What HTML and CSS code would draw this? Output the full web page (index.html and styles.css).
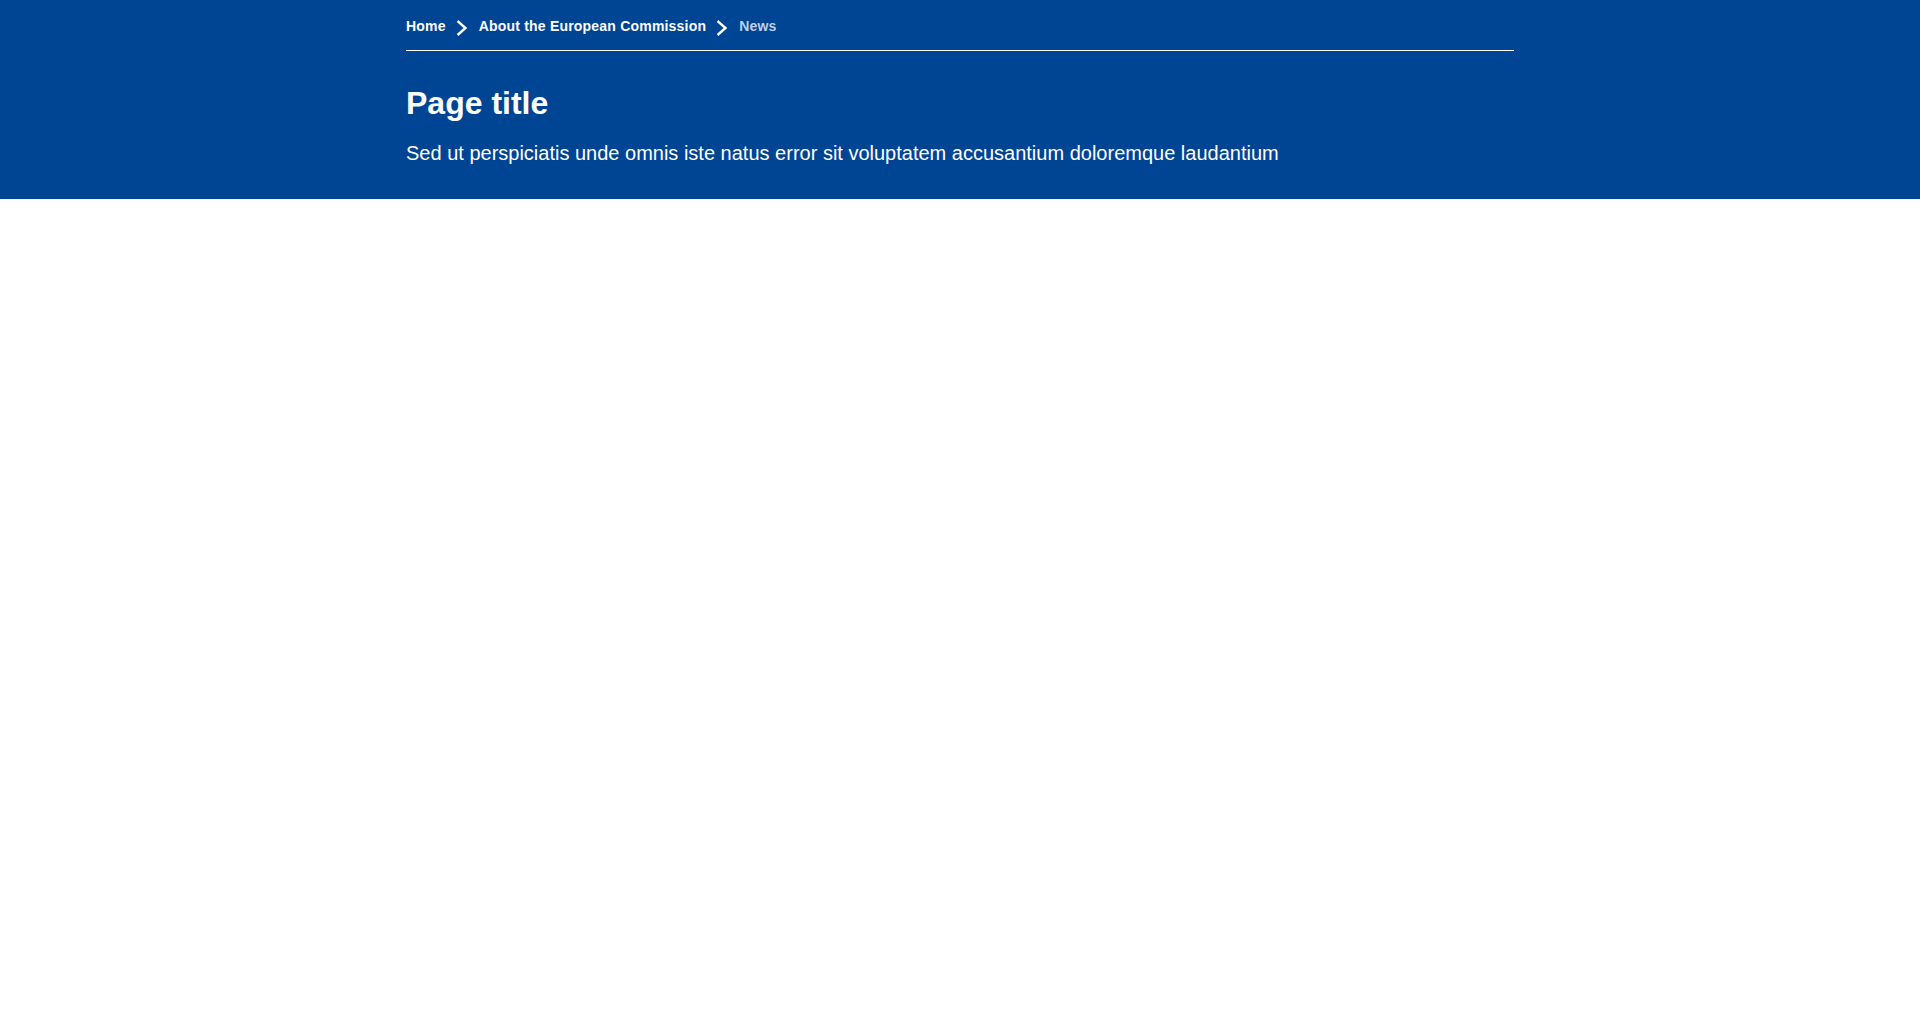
FILE: index.html
```html
<!DOCTYPE html>
<html lang="en">
<head>
<meta charset="utf-8">
<title>Page title</title>
<link rel="stylesheet" href="styles.css">
</head>
<body>
<header class="page-header">
  <div class="container">
    <nav class="breadcrumb" aria-label="Breadcrumb">
      <ol class="breadcrumb-list">
        <li class="breadcrumb-item"><a class="breadcrumb-link" href="#">Home</a><svg class="breadcrumb-chevron" width="12" height="16" viewBox="0 0 12 16" aria-hidden="true"><polyline points="2.5,1.8 9.5,8 2.5,14.2" fill="none" stroke="#ffffff" stroke-width="2.4" stroke-linecap="square" stroke-linejoin="miter"/></svg></li>
        <li class="breadcrumb-item"><a class="breadcrumb-link" href="#">About the European Commission</a><svg class="breadcrumb-chevron" width="12" height="16" viewBox="0 0 12 16" aria-hidden="true"><polyline points="2.5,1.8 9.5,8 2.5,14.2" fill="none" stroke="#ffffff" stroke-width="2.4" stroke-linecap="square" stroke-linejoin="miter"/></svg></li>
        <li class="breadcrumb-item breadcrumb-current" aria-current="page">News</li>
      </ol>
    </nav>
    <h1 class="page-title">Page title</h1>
    <p class="page-description">Sed ut perspiciatis unde omnis iste natus error sit voluptatem accusantium doloremque laudantium</p>
  </div>
</header>
</body>
</html>
```

FILE: styles.css
```css
html, body {
  margin: 0;
  padding: 0;
  background: #ffffff;
}

body {
  font-family: "Liberation Sans", Arial, sans-serif;
  color: #ffffff;
}

.page-header {
  background: #004494;
  padding-bottom: 32px;
}

.container {
  max-width: 1140px;
  margin: 0 auto;
  padding: 0 16px;
  box-sizing: border-box;
}

.breadcrumb {
  padding: 16px 0 14px;
  border-bottom: 1px solid #ffffff;
}

.breadcrumb-list {
  display: flex;
  align-items: center;
  list-style: none;
  margin: 0;
  padding: 0;
  font-size: 14px;
  line-height: 20px;
  font-weight: 700;
  letter-spacing: 0.2px;
}

.breadcrumb-item {
  display: flex;
  align-items: center;
}

.breadcrumb-link {
  color: #ffffff;
  text-decoration: none;
}

.breadcrumb-chevron {
  display: block;
  margin: 3px 11px 0 10px;
}

.breadcrumb-current {
  color: #bdd0ec;
}

.page-title {
  margin: 32px 0 0;
  font-size: 32px;
  line-height: 40px;
  font-weight: 700;
}

.page-description {
  margin: 16px 0 0;
  font-size: 20px;
  line-height: 28px;
  font-weight: 400;
}
```
